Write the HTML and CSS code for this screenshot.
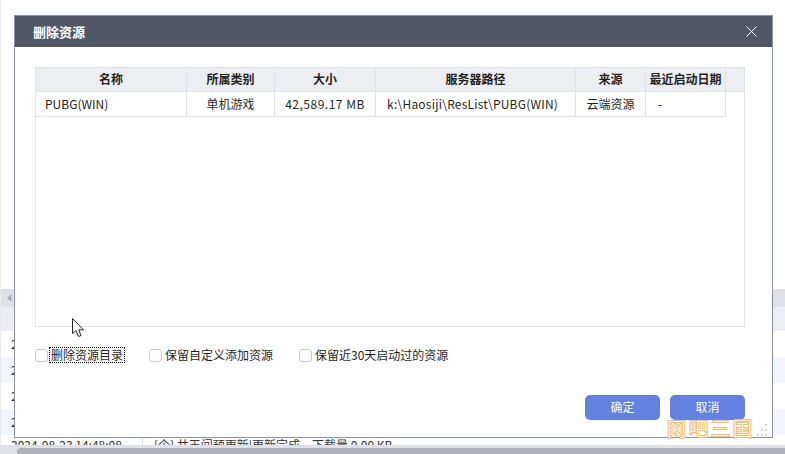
FILE: index.html
```html
<!DOCTYPE html>
<html lang="zh-CN">
<head>
<meta charset="utf-8">
<title>删除资源</title>
<link rel="stylesheet" href="styles.css">
</head>
<body>
<div class="backdrop">
  <div class="bg-top"></div>
  <div class="bg-bar"><svg class="bg-arrow" width="5" height="8" viewBox="0 0 5 8"><path d="M4.500 0V8L0 4Z" fill="#a9adb6"/></svg></div>
  <div class="bg-head"></div>
  <div class="bg-row">2</div>
  <div class="bg-row alt">2</div>
  <div class="bg-row">2</div>
  <div class="bg-row alt">2</div>
  <div class="bg-row last"><span class="bg-date">2024-08-23 14:48:08</span><span class="bg-msg">[企] 共王闯预更新|更新完成，下载量 0.00 KB</span></div>
  <div class="bg-scroll"><div class="bg-thumb"></div></div>
</div>

<section class="modal">
  <header class="modal-head">
    <h1 class="modal-title">删除资源</h1>
    <svg class="modal-close" width="11" height="11" viewBox="0 0 11 11"><path d="M.5.500 10.500 10.500M10.500.5.500 10.500" stroke="#fff" stroke-width="1" fill="none"/></svg>
  </header>
  <div class="modal-body">
    <div class="table">
      <div class="row row-head">
        <div class="cell c1">名称</div>
        <div class="cell c2">所属类别</div>
        <div class="cell c3">大小</div>
        <div class="cell c4">服务器路径</div>
        <div class="cell c5">来源</div>
        <div class="cell c6">最近启动日期</div>
      </div>
      <div class="row row-data">
        <div class="cell c1 left">PUBG(WIN)</div>
        <div class="cell c2">单机游戏</div>
        <div class="cell c3 wide">42,589.17 MB</div>
        <div class="cell c4 path">k:\Haosiji\ResList\PUBG(WIN)</div>
        <div class="cell c5">云端资源</div>
        <div class="cell c6 dash">-</div>
      </div>
    </div>
    <div class="options">
      <label class="opt opt1"><span class="box"></span><span class="lbl focus">删除资源目录</span></label>
      <label class="opt opt2"><span class="box"></span><span class="lbl">保留自定义添加资源</span></label>
      <label class="opt"><span class="box"></span><span class="lbl">保留近30天启动过的资源</span></label>
    </div>
    <div class="actions">
      <button class="btn">确定</button>
      <button class="btn">取消</button>
    </div>
  </div>
</section>

<svg class="cursor" width="13" height="20" viewBox="0 0 13 20"><path d="M.5.500V15.500L4 12.500 6.500 18.500 9 17.500 6.800 11.800H11.500Z" fill="#fff" stroke="#23252b" stroke-width="1" stroke-linejoin="round"/></svg>
<svg class="grip" width="10" height="12" viewBox="0 0 10 12"><g fill="#d5d8e2"><rect x="8" y="0" width="2" height="2"/><rect x="4" y="5" width="2" height="2"/><rect x="8" y="5" width="2" height="2"/><rect x="0" y="10" width="2" height="2"/><rect x="4" y="10" width="2" height="2"/><rect x="8" y="10" width="2" height="2"/></g></svg>
<div class="watermark">网吧三国</div>
</body>
</html>
```
FILE: styles.css
```css
* { box-sizing: border-box; }
html, body { margin: 0; padding: 0; }
body {
  width: 785px;
  height: 454px;
  overflow: hidden;
  position: relative;
  background: #fff;
  font-family: "Noto Sans CJK SC", "Noto Sans", sans-serif;
  font-size: 12px;
  color: #1f1f1f;
}
.backdrop { width: 785px; height: 454px; display: flex; flex-direction: column; border-left: 1px solid #e9ebf3; }
.bg-top { height: 289px; flex: none; }
.bg-bar { height: 18px; flex: none; background: #dfe1e6; display: flex; align-items: center; padding-left: 6px; }
.bg-head { height: 24px; flex: none; background: #edeef2; }
.bg-row { height: 26px; flex: none; padding-left: 10px; line-height: 26px; overflow: hidden; }
.bg-row.alt { background: #f2f5fd; }
.bg-row.last { height: 10px; display: flex; line-height: 20px; color: #333; }
.bg-date { width: 131px; flex: none; }
.bg-msg { border-left: 1px solid #dfe1e6; padding-left: 11px; }
.bg-scroll { height: 9px; flex: none; background: #dfe1e6; padding-left: 17px; margin-left: -1px; padding-top: 3px; }
.bg-thumb { height: 6px; width: 768px; background: #aeb0bd; border-radius: 4px 0 0 0; }

.modal {
  position: absolute;
  left: 14px;
  top: 15px;
  width: 759px;
  height: 423px;
  background: #fff;
  border: 1px solid #8a92a9;
  display: flex;
  flex-direction: column;
}
.modal-head {
  height: 31px;
  flex: none;
  background: #505868;
  display: flex;
  align-items: center;
  justify-content: space-between;
  padding: 0 15px 1px 18px;
}
.modal-title { margin: 0; font-size: 13px; font-weight: 700; color: #fff; }
.modal-body { flex: 1; display: flex; flex-direction: column; padding: 20px 27px 17px 20px; }
.table { height: 260px; flex: none; border: 1px solid #e1e3ea; }
.row { display: flex; }
.row-head { height: 24px; background: #edeef2; font-weight: 700; border-bottom: 1px solid #e1e3ea; }
.row-data { height: 25px; width: 689px; border-bottom: 1px solid #e1e3ea; }
.cell {
  flex: none;
  display: flex;
  align-items: center;
  justify-content: center;
  border-right: 1px solid #e1e3ea;
  white-space: nowrap;
  padding-bottom: 2px;
}
.c1 { width: 151px; }
.c2 { width: 88px; }
.c3 { width: 101px; }
.c4 { width: 200px; }
.c5 { width: 70px; }
.c6 { width: 80px; }
.left { justify-content: flex-start; padding-left: 9px; }
.dash { justify-content: flex-start; padding-left: 12px; }
.wide { letter-spacing: .5px; }
.path { justify-content: flex-start; padding-left: 11px; letter-spacing: .21px; }

.options { display: flex; align-items: center; margin-top: 20px; height: 16px; }
.opt { display: flex; align-items: center; }
.opt1 { width: 114px; }
.opt2 { width: 150px; }
.box { width: 13px; height: 13px; border: 1px solid #c8cad2; border-radius: 3px; background: #fff; flex: none; }
.lbl { margin-left: 3px; line-height: 14px; white-space: nowrap; }
.focus { margin-left: 2px; outline: 1px dotted #000; outline-offset: 0; padding: 0 1px; }

.actions { display: flex; justify-content: flex-end; gap: 10px; margin-top: auto; }
.btn {
  width: 75px;
  height: 25px;
  border: 0;
  padding: 0 0 2px;
  border-radius: 5px;
  background: #6381e0;
  color: #fff;
  font: inherit;
}

.cursor { position: absolute; left: 72px; top: 318px; }
.grip { position: absolute; left: 757px; top: 424px; }
.watermark {
  position: absolute;
  left: 667px;
  top: 416px;
  font-size: 19px;
  font-weight: 300;
  line-height: 24px;
  letter-spacing: 3px;
  white-space: nowrap;
  color: #fffdf6;
  -webkit-text-stroke: 2px #f0b566;
  paint-order: stroke fill;
  text-shadow: 0 0 3px #f9dcae;
}
```
